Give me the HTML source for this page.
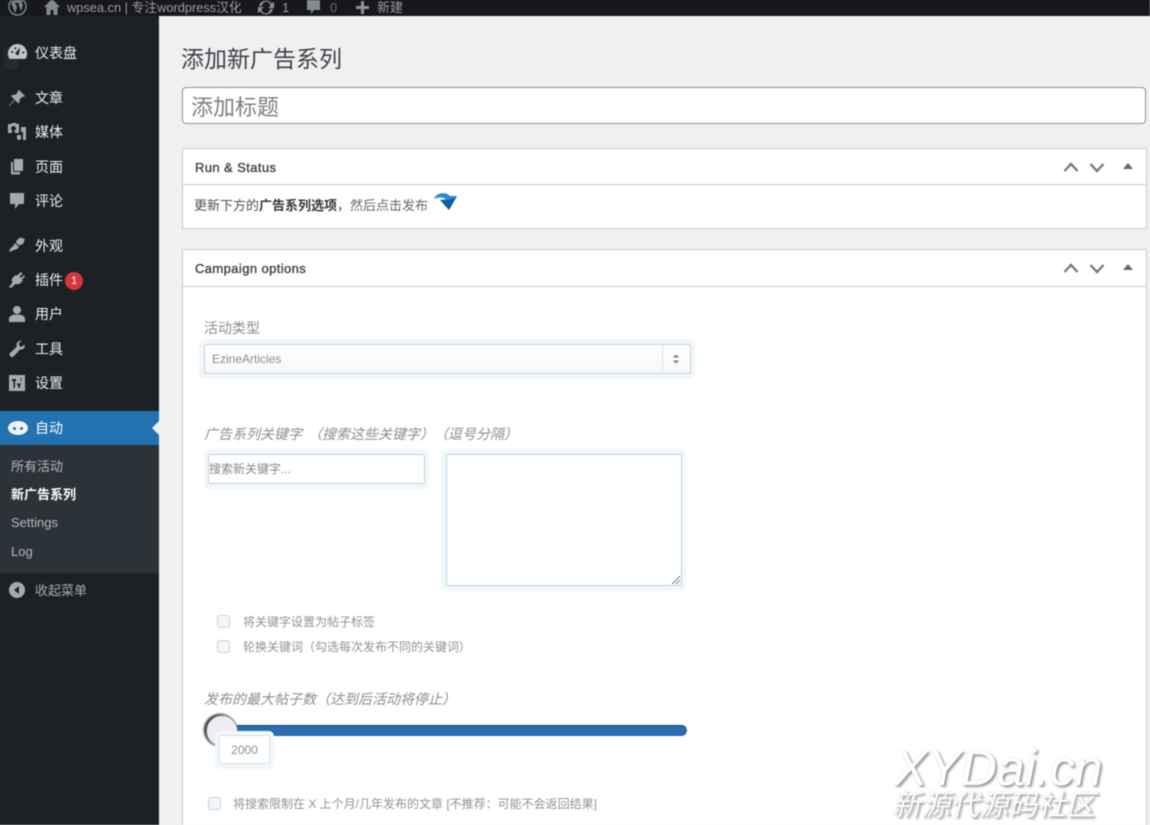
<!DOCTYPE html>
<html lang="zh"><head><meta charset="utf-8"><title>添加新广告系列</title>
<style>
*{box-sizing:border-box}
html{margin:0;padding:0;width:1150px;height:825px;overflow:hidden;background:#f0f0f1}
body{margin:0;padding:0;width:1150px;height:825px;background:#f0f0f1;font-family:"Liberation Sans","Noto Sans CJK SC",sans-serif;filter:blur(.45px)}
.a{position:absolute;white-space:nowrap}
#bar{position:absolute;left:0;top:0;width:1150px;height:16px;background:#16181b;overflow:hidden}
#side{position:absolute;left:0;top:16px;width:159px;height:809px;background:#1d2126}
.m{position:absolute;left:35px;font-size:14px;line-height:20px;color:#eceeef;white-space:nowrap}
.s{position:absolute;left:11px;font-size:13px;line-height:18px;color:#b4b9be;white-space:nowrap}
.i{position:absolute;left:8px;width:18px;height:18px;fill:#a7aaad}
.box{position:absolute;left:182px;width:965px;background:#fff;border:1px solid #c8cacc}
.hd{position:absolute;left:0;right:0;top:0;border-bottom:1px solid #c8cacc}
.ttl{position:absolute;left:12px;font-size:13px;letter-spacing:.4px;-webkit-text-stroke:.35px #3a3f44;color:#3a3f44;line-height:18px;white-space:nowrap}
.lb{font-size:14px;color:#8a8d90;line-height:18px}
.lc{font-size:12px;color:#8f9295;line-height:18px}
.glow{position:absolute;background:#f1f7fa;border-radius:5px}
.ck{position:absolute;width:13px;height:13px;border:1px solid #c7d3dc;border-radius:3px;background:#f3f6f8}
.ctl{position:absolute;fill:none;stroke:#777;stroke-width:2.300}
</style></head><body>
<div class="a" style="left:-6px;top:-6px;width:1156px;height:22px;background:#16181b"></div>
<div id="bar">
<svg class="a" style="left:8px;top:-3px" width="19" height="19" viewBox="0 0 20 20"><circle cx="10" cy="10" r="9" fill="none" stroke="#7f8386" stroke-width="1.600"/><path d="M3.500 7l4 10 2-6-1.500-4h-1v-1h5v1h-1.200l3 8 1.500-5c.5-2-.5-3.500-.5-4.500 0-.7.5-1.200 1-1.300C13.500 2.500 11.800 2 10 2 7.200 2 4.800 3.900 3.500 6.500z" fill="#7f8386"/></svg>
<svg class="a" style="left:44px;top:-2px" width="16" height="17" viewBox="0 0 16 17"><path d="M8 1L0 9h2.500v8h4v-5h3v5h4V9H16z" fill="#858a8d"/></svg>
<div class="a" style="left:67px;top:-1px;font-size:12.800px;line-height:17px;color:#9a9da0">wpsea.cn | 专注wordpress汉化</div>
<svg class="a" style="left:257px;top:-1px" width="18" height="17" viewBox="0 0 18 17"><path d="M9 1.500a6.500 6.500 0 0 1 5.500 3L17 3v6h-6l2.500-2.200A4 4 0 0 0 5 7H2a7 7 0 0 1 7-5.500zM1 8h6l-2.500 2.200A4 4 0 0 0 13 10h3a7 7 0 0 1-12.500 2.500L1 14z" fill="#8f9295"/></svg>
<div class="a" style="left:282px;top:-1px;font-size:13px;line-height:17px;color:#9a9da0">1</div>
<svg class="a" style="left:306px;top:-1px" width="15" height="17" viewBox="0 0 15 17"><path d="M1 1h13v10H8l-3 4v-4H1z" fill="#858a8d"/></svg>
<div class="a" style="left:330px;top:-1px;font-size:13px;line-height:17px;color:#666a6e">0</div>
<svg class="a" style="left:355px;top:0" width="15" height="15" viewBox="0 0 15 15"><path d="M6 1h3v5h5v3H9v5H6V9H1V6h5z" fill="#8f9295"/></svg>
<div class="a" style="left:377px;top:-1px;font-size:13px;line-height:17px;color:#9a9da0">新建</div>
</div>

<div id="side">
<div class="a" style="left:-6px;top:0;width:6px;height:809px;background:#1d2126"></div>
<div class="a" style="left:4px;top:31px;width:15px;height:22px;background:#252a2f"></div>
<svg class="i" style="top:28px;width:19px;height:17px" viewBox="0 0 18 16"><path fill-rule="evenodd" d="M9 0a9 9 0 0 0-7.500 14h15A9 9 0 0 0 9 0zm0 10.500a1.800 1.800 0 0 1-1-3.300L11.500 3 10.500 8.500c.3 1-.3 2-1.500 2zM4 6.500a1 1 0 1 1 0 2 1 1 0 0 1 0-2zM7 3a1 1 0 1 1 0 2 1 1 0 0 1 0-2zM14.500 7a1 1 0 1 1 0 2 1 1 0 0 1 0-2z" fill="#c3c4c7"/></svg>
<div class="m" style="top:27px">仪表盘</div>
<svg class="i" style="top:73px" viewBox="0 0 18 18"><path d="M11 1l6 6-1.500 1-1-.5-3 3c.5 1.500 0 3-1 4L7 11 1.500 17 1 16.500 6.500 10.500 3 7c1-1 2.500-1.500 4-1l3-3-.5-1z"/></svg>
<div class="m" style="top:72px">文章</div>
<svg class="i" style="top:107px" viewBox="0 0 18 18"><path d="M0 1h3l1-1h4l1 1h2v9H7.500A3 3 0 0 0 4 8V10H0zM5.500 3a2.500 2.500 0 1 0 0 5 2.500 2.500 0 0 0 0-5zM12 4h6v13h-3v-8h-2V4zM9 12h4v3a2 2 0 1 1-4 0z"/></svg>
<div class="m" style="top:106px">媒体</div>
<svg class="i" style="top:142px" viewBox="0 0 18 18"><path d="M6 1h9v12H6zM3 4h2v10h7v2.500H3z"/></svg>
<div class="m" style="top:141px">页面</div>
<svg class="i" style="top:176px" viewBox="0 0 18 18"><path d="M2 1h14v11h-5l-4 5v-5H2z"/></svg>
<div class="m" style="top:175px">评论</div>
<svg class="i" style="top:221px" viewBox="0 0 18 18"><path d="M9 3l3-2.500 5 1.500-2 5-3 1-1 .5-3-3zM7 6l4 4-2 2-3 1-5 2 1-3 3-3z"/></svg>
<div class="m" style="top:220px">外观</div>
<svg class="i" style="top:255px" viewBox="0 0 18 18"><path d="M13 1l1.500 1.500L11.500 5.500l1.500 1.500 3-3L17 5.500l-3 3 1 1-2.500 2.500c-1.500 1.500-3.500 1.500-5 1L3 17l-2-1 3.500-4.500c-1-1.500-1-3.500.5-5L7.500 4l1 1z"/></svg>
<div class="m" style="top:254px">插件</div>
<div class="a" style="left:65px;top:256px;width:18px;height:18px;border-radius:50%;background:#d63638;color:#fff;font-size:11px;line-height:18px;text-align:center">1</div>
<svg class="i" style="top:289px" viewBox="0 0 18 18"><circle cx="9" cy="5" r="4"/><path d="M1 17v-3c0-3 3-4.500 8-4.500s8 1.500 8 4.500v3z"/></svg>
<div class="m" style="top:288px">用户</div>
<svg class="i" style="top:324px" viewBox="0 0 18 18"><path d="M16.500 4.500l-3 2.500-2.500-1.500V3l3-2.500C11.500.2 8.500 2 8.500 5c0 .7.100 1.200.3 1.700L2 13a2.500 2.500 0 0 0 3.500 3.500l6.500-7c2.500.7 5.700-1.500 4.500-5z"/></svg>
<div class="m" style="top:323px">工具</div>
<svg class="i" style="top:358px" viewBox="0 0 18 18"><path fill-rule="evenodd" d="M1 1h16v16H1zM4 5v2h1.500v7H7V7h1V5zm6 8v-2H9v-1.500h4V11h-1v3h-1.500v-1zM12.500 4v3h1V4z"/></svg>
<div class="m" style="top:357px">设置</div>
<div class="a" style="left:-6px;top:395px;width:165px;height:34px;background:#2271b1"></div>
<div class="a" style="left:152px;top:405px;width:0;height:0;border:7.500px solid transparent;border-right:7.500px solid #f0f0f1;border-left:0"></div>
<div class="a" style="left:8px;top:405px;width:20px;height:14px;border-radius:50%;background:#f0f4f8"></div>
<div class="a" style="left:13px;top:411px;width:3px;height:3px;border-radius:50%;background:#2271b1"></div>
<div class="a" style="left:20px;top:411px;width:3px;height:3px;border-radius:50%;background:#2271b1"></div>
<div class="m" style="top:402px;color:#fff">自动</div>
<div class="a" style="left:-6px;top:429px;width:165px;height:128px;background:#2c3338"></div>
<div class="s" style="top:442px">所有活动</div>
<div class="s" style="top:470px;color:#fff;font-weight:bold">新广告系列</div>
<div class="s" style="top:498px">Settings</div>
<div class="s" style="top:527px">Log</div>
<svg class="i" style="top:565px" viewBox="0 0 18 18"><path fill-rule="evenodd" d="M9 1a8 8 0 1 1 0 16A8 8 0 0 1 9 1zm2 4L6 9l5 4z"/></svg>
<div class="m" style="top:565px;color:#a7aaad;font-size:13px">收起菜单</div>
</div>

<div class="a" style="left:181px;top:43px;font-size:23px;line-height:32px;color:#3d4247">添加新广告系列</div>
<div class="a" style="left:182px;top:87px;width:964px;height:37px;background:#fff;border:1px solid #8c8f94;border-radius:4px;font-size:22px;line-height:40px;padding-left:8px;color:#7b7f83;overflow:hidden">添加标题</div>

<div class="box" style="top:148px;height:81px">
<div class="hd" style="height:36px"></div>
<div class="ttl" style="top:10px">Run &amp; Status</div>
<div class="a" style="left:11px;top:48px;font-size:13px;line-height:18px;color:#4a4e52">更新下方的<b style="color:#33373a">广告系列选项</b>，<span style="color:#63676a">然后点击发布</span></div>
<svg class="a" style="left:250px;top:43px" width="26" height="20" viewBox="0 0 26 20"><path d="M1 7C3 1 12-1 17 4l7 0-8 14-9-10 6-1C10 5 5 5 1 7z" fill="#2a8ad4"/><path d="M7 8l9 10 8-14c-3 3-10 5-17 4z" fill="#125c9c"/></svg>
</div>
<svg class="ctl" style="left:1063px;top:160px" width="74" height="14" viewBox="0 0 74 14"><path d="M1.500 11l6.500-7 6.500 7M27.500 4l6.500 7 6.500-7"/><path d="M60 9l5-6 5 6z" fill="#666" stroke="none"/></svg>

<div class="box" style="top:249px;height:576px;border-bottom:0">
<div class="hd" style="height:37px"></div>
<div class="ttl" style="top:10px">Campaign options</div>
</div>
<svg class="ctl" style="left:1063px;top:261px" width="74" height="14" viewBox="0 0 74 14"><path d="M1.500 11l6.500-7 6.500 7M27.500 4l6.500 7 6.500-7"/><path d="M60 9l5-6 5 6z" fill="#666" stroke="none"/></svg>

<div class="a lb" style="left:204px;top:319px">活动类型</div>
<div class="glow" style="left:199px;top:339px;width:496px;height:40px"></div>
<div class="a" style="left:204px;top:344px;width:487px;height:30px;background:linear-gradient(#fff,#f6f7f7);border:1px solid #c5d5dc;border-radius:2px;font-size:12px;line-height:28px;color:#8a8d90;padding-left:7px">EzineArticles
<div class="a" style="left:457px;top:0;width:1px;height:28px;background:#dfe3e5"></div>
<svg class="a" style="left:465px;top:8px" width="12" height="12" viewBox="0 0 12 12"><path d="M6 1.500L9 4.500H3zM6 10.500L3 7.500h6z" fill="#777"/></svg></div>

<div class="a lb" style="left:204px;top:425px;font-style:italic">广告系列关键字</div>
<div class="a lb" style="left:308px;top:425px;font-style:italic">（搜索这些关键字）</div>
<div class="a lb" style="left:434px;top:425px;font-style:italic">（逗号分隔）</div>
<div class="glow" style="left:204px;top:449px;width:225px;height:40px"></div>
<div class="a" style="left:208px;top:454px;width:217px;height:30px;background:#fff;border:1px solid #bfd3dc;border-radius:2px;font-size:12px;line-height:28px;color:#85888b">搜索新关键字...</div>
<div class="glow" style="left:441px;top:449px;width:245px;height:142px"></div>
<div class="a" style="left:446px;top:454px;width:236px;height:132px;background:#fff;border:1px solid #bfd3dc;border-radius:2px"></div>
<svg class="a" style="left:671px;top:575px" width="10" height="10" viewBox="0 0 10 10"><path d="M1 9l8-8M5 9l4-4" stroke="#777" stroke-width="1" fill="none"/></svg>

<div class="ck" style="left:217px;top:615px"></div>
<div class="a lc" style="left:243px;top:613px">将关键字设置为帖子标签</div>
<div class="ck" style="left:217px;top:640px"></div>
<div class="a lc" style="left:243px;top:638px">轮换关键词（勾选每次发布不同的关键词）</div>

<div class="a lb" style="left:204px;top:690px;font-style:italic">发布的最大帖子数（达到后活动将停止）</div>
<div class="a" style="left:206px;top:725px;width:481px;height:11px;background:#2a6db0;border-top:1px solid #123a5c;border-radius:6px"></div>
<div class="a" style="left:206px;top:715px;width:32px;height:32px;border-radius:50%;background:#ecedf2;border:1px solid #888;box-shadow:-2px -1px 2px #222"></div>
<div class="glow" style="left:215px;top:731px;width:59px;height:38px"></div>
<div class="a" style="left:219px;top:735px;width:51px;height:29px;background:#fff;border:1px solid #d2e2ea;border-radius:2px;font-size:12px;line-height:29px;text-align:center;color:#8a8d90">2000</div>

<div class="ck" style="left:208px;top:797px"></div>
<div class="a lc" style="left:233px;top:795px">将搜索限制在 X 上个月/几年发布的文章 [不推荐：可能不会返回结果]</div>

<div class="a" style="left:894px;top:738px;font-size:50px;line-height:60px;font-style:italic;color:#fff;text-shadow:2px 2px 2px #999,0 0 1px #bbb">XYDai.cn</div>
<div class="a" style="left:892px;top:790px;font-size:29px;line-height:32px;font-style:italic;color:#fff;text-shadow:2px 2px 2px #999,0 0 1px #bbb">新源代源码社区</div>
</body></html>
